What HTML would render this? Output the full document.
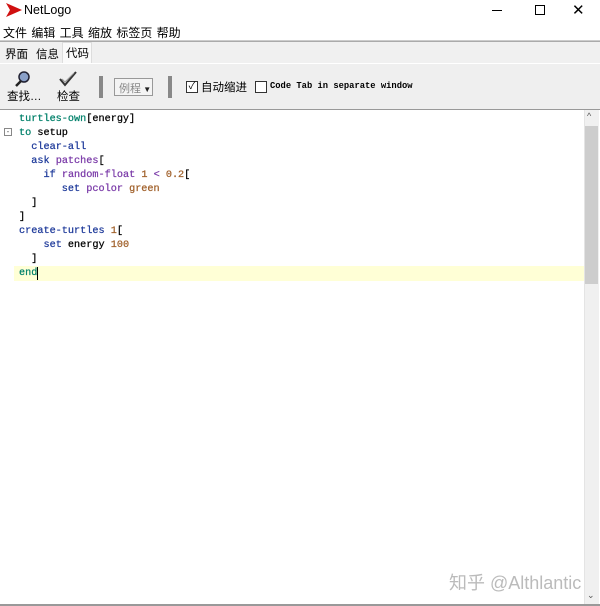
<!DOCTYPE html>
<html><head><meta charset="utf-8"><style>
*{margin:0;padding:0;box-sizing:border-box}
body{width:600px;height:606px;background:#f0f0f0;position:relative;overflow:hidden;font-family:"Liberation Sans","Noto Sans CJK SC",sans-serif;font-size:12px;color:#000}
.a{position:absolute}
.code{font-family:"Liberation Mono",monospace;font-size:10.2px;line-height:14px;white-space:pre;-webkit-text-stroke:0.25px}
.k{color:#00806a}.b{color:#1e3a9a}.p{color:#7a3aa8}.n{color:#a0602a}
</style></head><body>
<div class="a" style="left:0;top:0;width:600px;height:24px;background:#fff"></div>
<svg class="a" style="left:6px;top:3px" width="16" height="14"><polygon points="0,0 16,7 0,14 4,7" fill="#d01010"/></svg>
<div class="a" style="left:24px;top:3px;font-size:12.5px">NetLogo</div>
<div class="a" style="left:492px;top:10px;width:10px;height:1px;background:#000"></div>
<div class="a" style="left:535px;top:5px;width:10px;height:10px;border:1px solid #000"></div>
<div class="a" style="left:572px;top:1px;font-size:15px;font-weight:lighter">✕</div>
<div class="a" style="left:0;top:24px;width:600px;height:17px;background:#fff;border-bottom:1px solid #ccc"></div>
<div class="a" style="left:3px;top:24px;font-size:12px;word-spacing:1px">文件 编辑 工具 缩放 标签页 帮助</div>
<div class="a" style="left:0;top:41px;width:600px;height:1px;background:#aaa"></div>
<div class="a" style="left:5px;top:46px;font-size:11.5px">界面</div>
<div class="a" style="left:36px;top:46px;font-size:11.5px">信息</div>
<div class="a" style="left:62px;top:42px;width:30px;height:21px;background:#fafafa;border:1px solid #ddd;border-bottom:none"></div>
<div class="a" style="left:66px;top:45px;font-size:11.5px">代码</div>
<div class="a" style="left:0;top:63px;width:600px;height:46px;background:#efefef;border-top:1px solid #fff"></div>
<svg class="a" style="left:14px;top:70px" width="18" height="18"><circle cx="10" cy="7" r="5" fill="#8aa0c8" stroke="#223" stroke-width="1.5"/><line x1="7" y1="11" x2="2" y2="16" stroke="#222" stroke-width="2.5"/></svg>
<div class="a" style="left:7px;top:88px;font-size:11.5px">查找…</div>
<svg class="a" style="left:58px;top:70px" width="20" height="18"><path d="M2 9 L7 15 L18 2" fill="none" stroke="#333" stroke-width="2"/><path d="M4 9 L7 12 L16 3" fill="none" stroke="#999" stroke-width="1"/></svg>
<div class="a" style="left:57px;top:88px;font-size:11.5px">检查</div>
<div class="a" style="left:99px;top:76px;width:4px;height:22px;background:#888"></div>
<div class="a" style="left:114px;top:78px;width:39px;height:18px;border:1px solid #999;background:#f4f4f4;font-size:11px;color:#888;padding:1px 0 0 4px">例程<span style="color:#222;font-size:8px"> ▼</span></div>
<div class="a" style="left:168px;top:76px;width:4px;height:22px;background:#888"></div>
<div class="a" style="left:186px;top:81px;width:12px;height:12px;border:1px solid #333;background:#fff;font-size:10px;line-height:10px;text-align:center">✓</div>
<div class="a" style="left:201px;top:79px;font-size:11.5px">自动缩进</div>
<div class="a" style="left:255px;top:81px;width:12px;height:12px;border:1px solid #333;background:#fff"></div>
<div class="a" style="left:270px;top:81px;font-family:'Liberation Mono',monospace;font-size:8.8px;font-weight:bold">Code Tab in separate window</div>
<div class="a" style="left:0;top:109px;width:600px;height:497px;background:#fff;border-top:1px solid #999"></div>
<div class="a" style="left:14px;top:266px;width:570px;height:15px;background:#ffffd6"></div>
<div class="a" style="left:4px;top:128px;width:8px;height:8px;border:1px solid #888;font-size:8px;line-height:5px;text-align:center;color:#555">-</div>
<div class="a code" style="left:19px;top:113px"><span class="k">turtles-own</span>[energy]
<span class="k">to</span> setup
  <span class="b">clear-all</span>
  <span class="b">ask</span> <span class="p">patches</span>[
    <span class="b">if</span> <span class="p">random-float</span> <span class="n">1</span> <span class="p">&lt;</span> <span class="n">0.2</span>[
       <span class="b">set</span> <span class="p">pcolor</span> <span class="n">green</span>
  ]
]
<span class="b">create-turtles</span> <span class="n">1</span>[
    <span class="b">set</span> energy <span class="n">100</span>
  ]
<span class="k">end</span></div>
<div class="a" style="left:37px;top:267px;width:1px;height:13px;background:#000"></div>
<div class="a" style="left:584px;top:110px;width:15px;height:494px;background:#f0f0f0;border-left:1px solid #e4e4e4"></div>
<div class="a" style="left:585px;top:126px;width:13px;height:158px;background:#cdcdcd"></div>
<div class="a" style="left:587px;top:111px;font-size:9px;color:#555">^</div>
<div class="a" style="left:587px;top:590px;font-size:9px;color:#555">⌄</div>
<div class="a" style="left:449px;top:569px;font-size:18px;color:#bbb">知乎 @Althlantic</div>
<div class="a" style="left:0;top:604px;width:600px;height:2px;background:#999"></div>
</body></html>
